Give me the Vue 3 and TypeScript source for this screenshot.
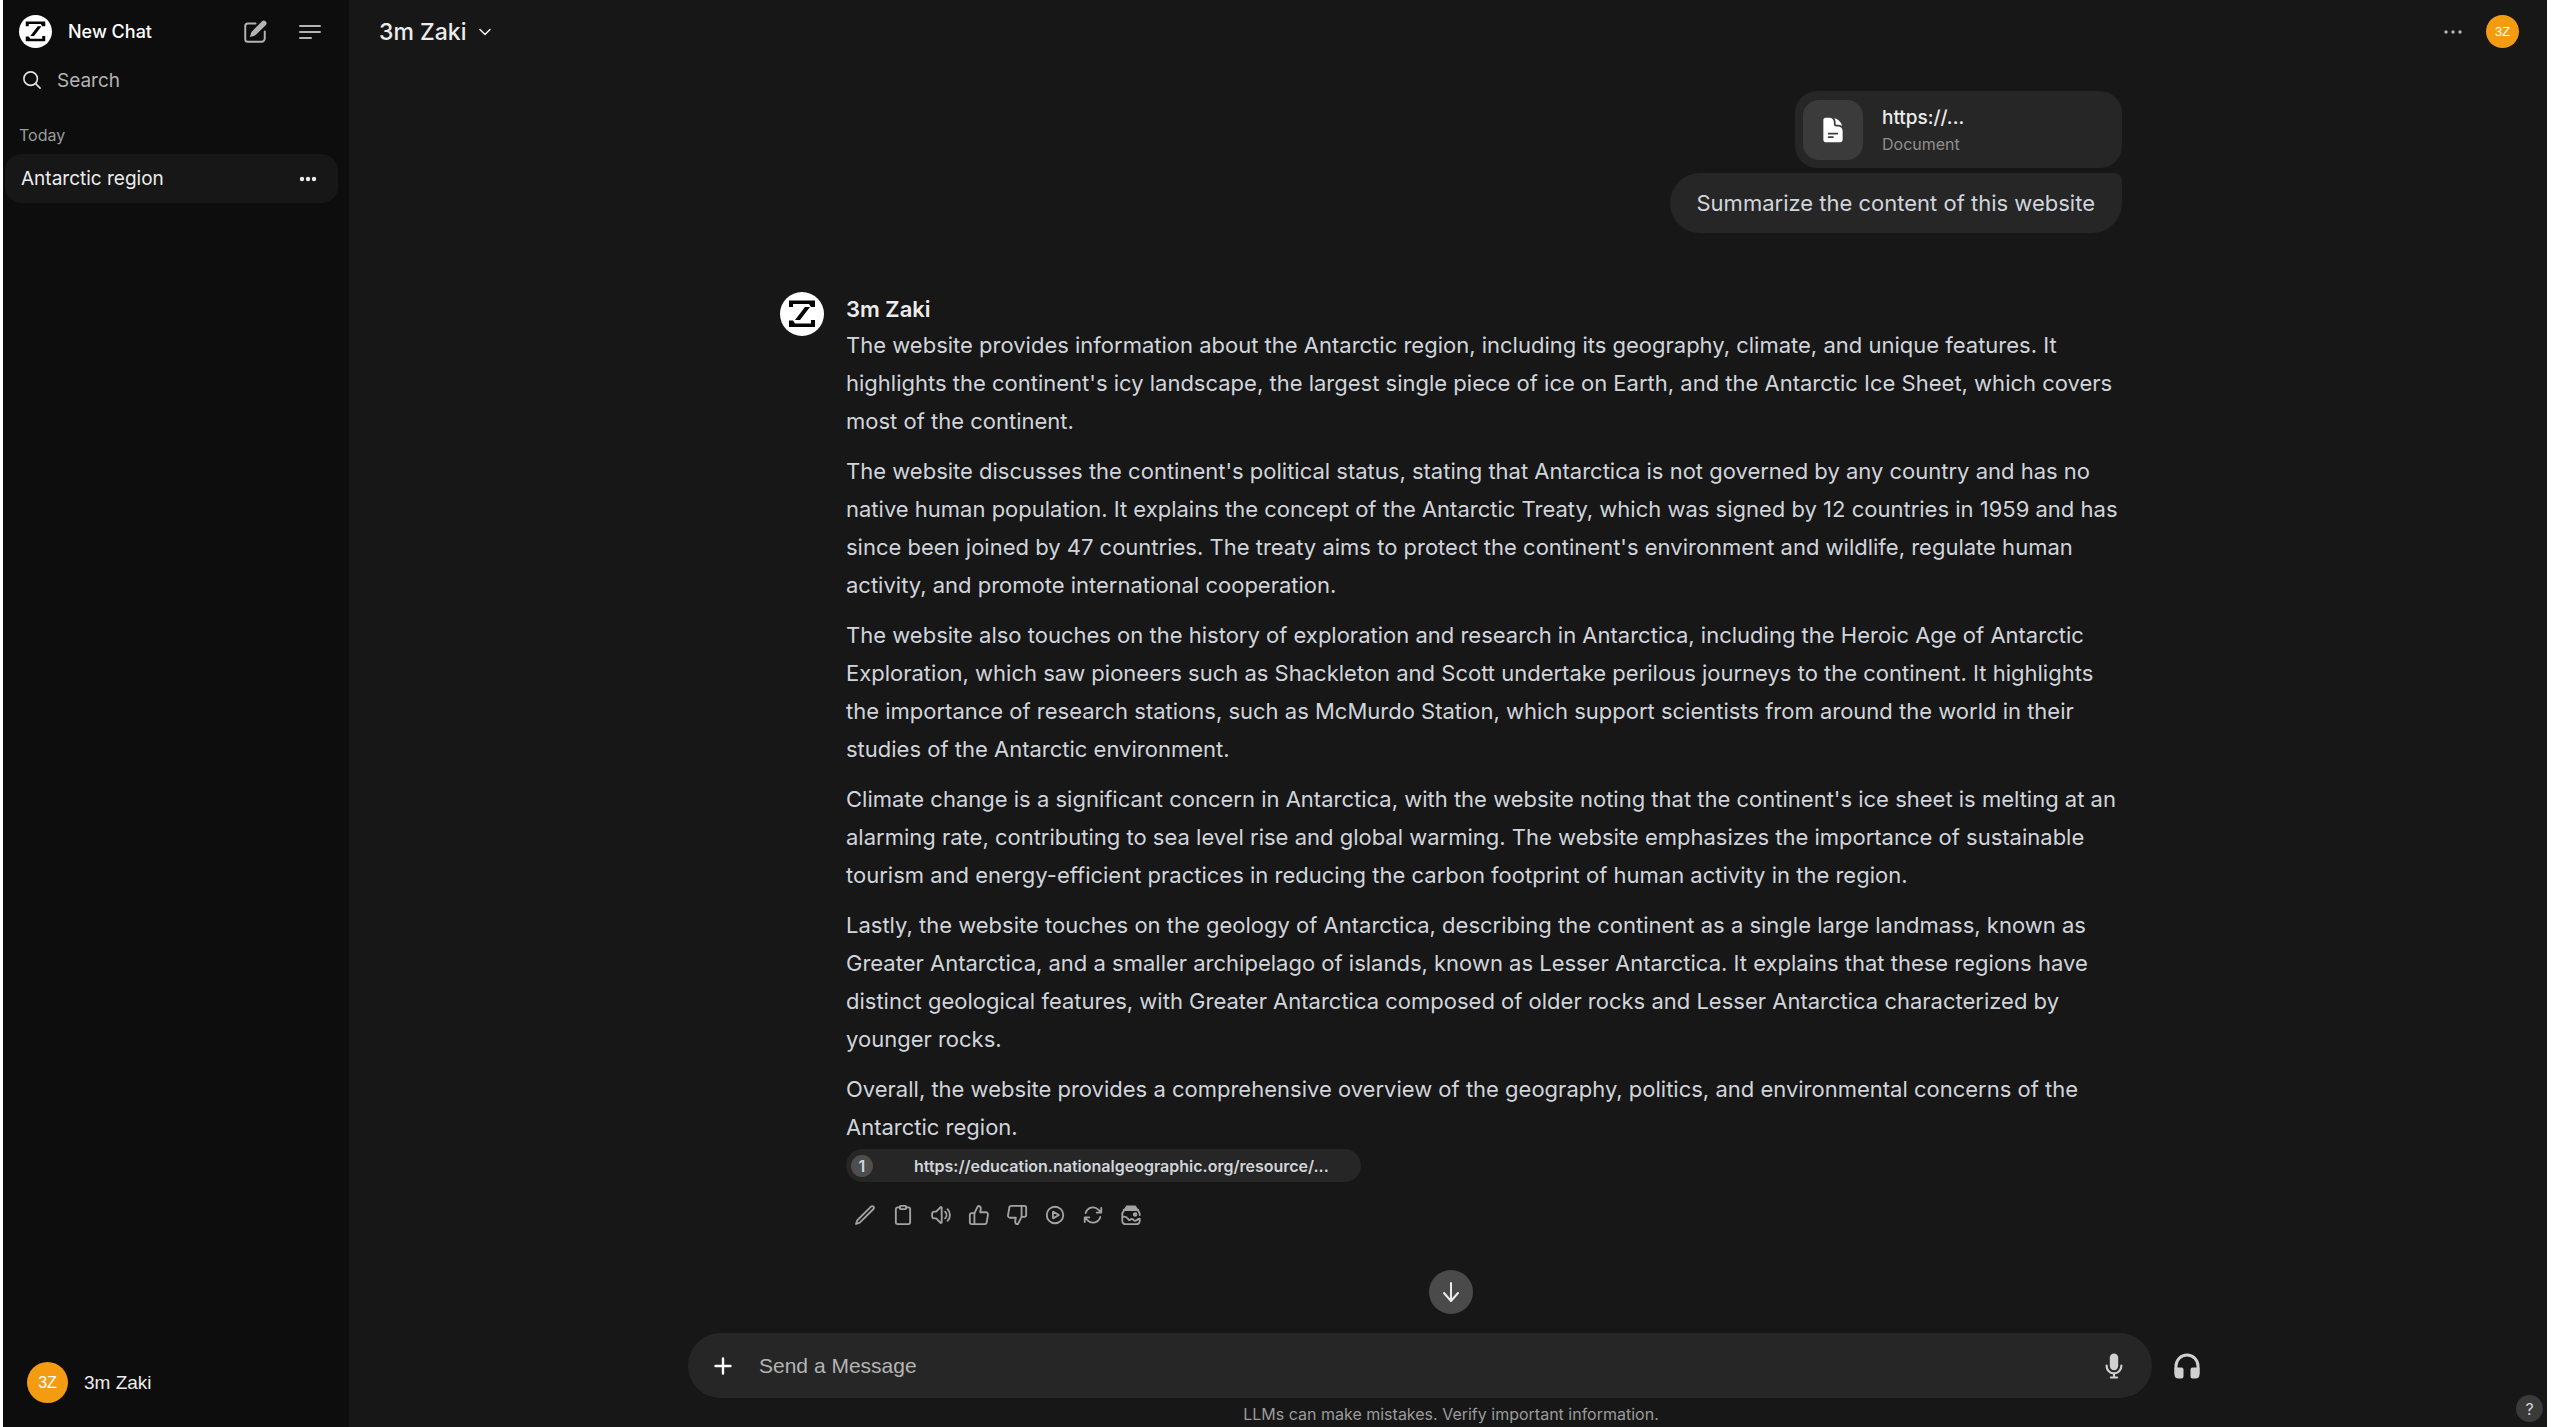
<script setup lang="ts">
import { ref } from 'vue'

interface Action {
  name: string
  paths: string[]
}

const draft = ref('')
const query = ref('')

const paragraphs: string[] = [
  "The website provides information about the Antarctic region, including its geography, climate, and unique features. It highlights the continent's icy landscape, the largest single piece of ice on Earth, and the Antarctic Ice Sheet, which covers most of the continent.",
  "The website discusses the continent's political status, stating that Antarctica is not governed by any country and has no native human population. It explains the concept of the Antarctic Treaty, which was signed by 12 countries in 1959 and has since been joined by 47 countries. The treaty aims to protect the continent's environment and wildlife, regulate human activity, and promote international cooperation.",
  'The website also touches on the history of exploration and research in Antarctica, including the Heroic Age of Antarctic Exploration, which saw pioneers such as Shackleton and Scott undertake perilous journeys to the continent. It highlights the importance of research stations, such as McMurdo Station, which support scientists from around the world in their studies of the Antarctic environment.',
  "Climate change is a significant concern in Antarctica, with the website noting that the continent's ice sheet is melting at an alarming rate, contributing to sea level rise and global warming. The website emphasizes the importance of sustainable tourism and energy-efficient practices in reducing the carbon footprint of human activity in the region.",
  'Lastly, the website touches on the geology of Antarctica, describing the continent as a single large landmass, known as Greater Antarctica, and a smaller archipelago of islands, known as Lesser Antarctica. It explains that these regions have distinct geological features, with Greater Antarctica composed of older rocks and Lesser Antarctica characterized by younger rocks.',
  'Overall, the website provides a comprehensive overview of the geography, politics, and environmental concerns of the Antarctic region.',
]

const actions: Action[] = [
  { name: 'Edit', paths: ['M16.862 4.487l1.687-1.688a1.875 1.875 0 1 1 2.652 2.652L6.832 19.82a4.5 4.5 0 0 1-1.897 1.13l-2.685.8.8-2.685a4.5 4.5 0 0 1 1.13-1.897L16.863 4.487z'] },
  { name: 'Copy', paths: ['M8.5 3.7H6.2A2 2 0 0 0 4.2 5.7V20a2 2 0 0 0 2 2h11.6a2 2 0 0 0 2-2V5.7a2 2 0 0 0-2-2h-2.3', 'M9.5 2h5a1 1 0 0 1 1 1v1.6a1 1 0 0 1-1 1h-5a1 1 0 0 1-1-1V3a1 1 0 0 1 1-1z'] },
  { name: 'Read Aloud', paths: ['M19.114 5.636a9 9 0 0 1 0 12.728M16.463 8.288a5.25 5.25 0 0 1 0 7.424M6.75 8.25l4.72-4.72a.75.75 0 0 1 1.28.53v15.88a.75.75 0 0 1-1.28.53l-4.72-4.72H4.51c-.88 0-1.704-.507-1.938-1.354A9.01 9.01 0 0 1 2.25 12c0-.83.112-1.633.322-2.396C2.806 8.756 3.63 8.25 4.51 8.25H6.75z'] },
  { name: 'Good Response', paths: ['M7 10v12H4a2 2 0 0 1-2-2v-8a2 2 0 0 1 2-2z', 'M7 10l4-8a3 3 0 0 1 3 3l-.7 4H19.5a2.3 2.3 0 0 1 2.3 2.7l-1.4 8A2.3 2.3 0 0 1 18.1 22H7'] },
  { name: 'Bad Response', paths: ['M17 14V2h3a2 2 0 0 1 2 2v8a2 2 0 0 1-2 2z', 'M17 14l-4 8a3 3 0 0 1-3-3l.7-4H4.5a2.3 2.3 0 0 1-2.3-2.7l1.4-8A2.3 2.3 0 0 1 5.9 2H17'] },
  { name: 'Continue Response', paths: ['M21 12a9 9 0 1 1-18 0 9 9 0 0 1 18 0z', 'M15.91 11.672a.375.375 0 0 1 0 .656l-5.603 3.113a.375.375 0 0 1-.557-.328V8.887c0-.286.307-.466.557-.327l5.603 3.112z'] },
  { name: 'Regenerate', paths: ['M16.023 9.348h4.992V4.356M2.985 19.644v-4.992h4.992M2.985 14.652l3.181 3.183a8.25 8.25 0 0 0 13.803-3.7M4.031 9.865a8.25 8.25 0 0 1 13.803-3.7l3.181 3.182'] },
]
</script>

<template>
  <div class="app">
    <aside class="sidebar">
      <div class="side-top">
        <button class="brand" type="button">
          <svg class="logo" viewBox="0 0 44 44" aria-hidden="true">
            <circle cx="22" cy="22" r="22" fill="#fff" />
            <path d="M9 8.500H35V15H31L29 12H13V15H9ZM9 35V28.500H13L15 31.500H31V28H35V35ZM25 15H30L20 28H15Z" fill="#050505" />
          </svg>
          <span>New Chat</span>
        </button>
        <button class="icon-btn" type="button" aria-label="New Chat">
          <svg width="26" height="26" viewBox="0 0 24 24" aria-hidden="true">
            <path d="M12.5 4.200H5.400A2.400 2.400 0 0 0 3 6.600v12A2.400 2.400 0 0 0 5.400 21H18a3 3 0 0 0 3-3V11.500" fill="none" stroke="currentColor" stroke-width="1.800" stroke-linecap="round" />
            <path d="M21.900 2.200a2.600 2.600 0 0 0-3.600 0L9.600 11a5 5 0 0 0-1.300 2.200L7.300 16.600l3.600-1a5 5 0 0 0 2.200-1.300l8.800-8.600a2.500 2.500 0 0 0 0-3.500z" fill="currentColor" />
          </svg>
        </button>
        <button class="icon-btn menu-btn" type="button" aria-label="Toggle sidebar">
          <svg width="22" height="16" viewBox="0 0 22 16" fill="none" stroke="currentColor" stroke-width="2" stroke-linecap="round" aria-hidden="true">
            <path d="M1 2h20M1 8h20M1 14h11" />
          </svg>
        </button>
      </div>
      <label class="search">
        <svg width="18" height="18" viewBox="0 0 20 20" fill="none" stroke="currentColor" stroke-width="1.800" stroke-linecap="round" aria-hidden="true">
          <circle cx="8.500" cy="8.500" r="7.500" /><path d="M14 14l5 5" />
        </svg>
        <input v-model="query" type="text" placeholder="Search" aria-label="Search" />
      </label>
      <h2 class="group">Today</h2>
      <nav class="chat">
        <a href="#">Antarctic region</a>
        <button class="icon-btn" type="button" aria-label="Chat menu">
          <svg width="18" height="6" viewBox="0 0 18 6" fill="currentColor" aria-hidden="true"><circle cx="3" cy="3" r="2.200" /><circle cx="9" cy="3" r="2.200" /><circle cx="15" cy="3" r="2.200" /></svg>
        </button>
      </nav>
      <button class="account" type="button">
        <span class="initials large">3Z</span>
        <span>3m Zaki</span>
      </button>
    </aside>

    <main class="main">
      <header class="topbar">
        <button class="model" type="button">
          <span>3m Zaki</span>
          <svg width="14" height="8" viewBox="0 0 14 8" fill="none" stroke="currentColor" stroke-width="1.600" stroke-linecap="round" stroke-linejoin="round" aria-hidden="true"><path d="M2 1.500l5 5 5-5" /></svg>
        </button>
        <button class="icon-btn more" type="button" aria-label="More">
          <svg width="18" height="6" viewBox="0 0 18 6" fill="currentColor" aria-hidden="true"><circle cx="2" cy="3" r="1.700" /><circle cx="9" cy="3" r="1.700" /><circle cx="16" cy="3" r="1.700" /></svg>
        </button>
        <button class="initials" type="button" aria-label="Account">3Z</button>
      </header>

      <section class="thread">
        <div class="prompt">
          <button class="file" type="button">
            <span class="file-icon">
              <svg width="28" height="28" viewBox="0 0 24 24" fill="currentColor" aria-hidden="true">
                <path fill-rule="evenodd" d="M5.625 1.500c-1.036 0-1.875.84-1.875 1.875v17.250c0 1.035.84 1.875 1.875 1.875h12.750c1.035 0 1.875-.84 1.875-1.875V12.750A3.750 3.750 0 0 0 16.500 9h-1.875a1.875 1.875 0 0 1-1.875-1.875V5.250A3.750 3.750 0 0 0 9 1.500H5.625ZM7.500 15a.75.75 0 0 1 .75-.75h7.500a.75.75 0 0 1 0 1.500h-7.500A.75.75 0 0 1 7.500 15Zm.75 2.250a.75.75 0 0 0 0 1.500H12a.75.75 0 0 0 0-1.500H8.250Z" />
                <path d="M12.971 1.816A5.230 5.230 0 0 1 14.250 5.250v1.875c0 .207.168.375.375.375H16.500a5.230 5.230 0 0 1 3.434 1.279 9.768 9.768 0 0 0-6.963-6.963Z" />
              </svg>
            </span>
            <span class="file-text">
              <span class="file-name">https://...</span>
              <span class="file-kind">Document</span>
            </span>
          </button>
          <p class="bubble">Summarize the content of this website</p>
        </div>

        <article class="reply">
          <svg class="avatar" viewBox="0 0 44 44" aria-hidden="true">
            <circle cx="22" cy="22" r="22" fill="#fff" />
            <path d="M9 8.500H35V15H31L29 12H13V15H9ZM9 35V28.500H13L15 31.500H31V28H35V35ZM25 15H30L20 28H15Z" fill="#050505" />
          </svg>
          <div class="answer">
            <h3>3m Zaki</h3>
            <div class="prose">
              <p v-for="text in paragraphs" :key="text">{{ text }}</p>
            </div>
            <a class="source" href="#"><span class="index">1</span><span>https://education.nationalgeographic.org/resource/...</span></a>
            <div class="actions">
              <button v-for="action in actions" :key="action.name" class="icon-btn" type="button" :aria-label="action.name">
                <svg width="22" height="22" viewBox="0 0 24 24" fill="none" stroke="currentColor" stroke-width="2" stroke-linecap="round" stroke-linejoin="round" aria-hidden="true">
                  <path v-for="d in action.paths" :key="d" :d="d" />
                </svg>
              </button>
              <button class="icon-btn" type="button" aria-label="Generate Image">
                <svg width="22" height="22" viewBox="0 0 24 24" fill="none" stroke="currentColor" stroke-width="2" stroke-linecap="round" stroke-linejoin="round" aria-hidden="true">
                  <path d="M7 1.500h10l3 4.500H4z" fill="currentColor" stroke="none" />
                  <path d="M4 6.500h16M2.500 10v8.500A3.500 3.500 0 0 0 6 22h12a3.500 3.500 0 0 0 3.500-3.500V16M21.500 12v-1a4 4 0 0 0-1.500-3M2.500 11A4 4 0 0 1 4 8M3 14c4-1 5 1 6.500 3 1.500 2 2-1.500 4-.500s2 2.500 4 1.500 2-2 4-2" />
                  <circle cx="16.500" cy="11.500" r="1.500" fill="currentColor" />
                </svg>
              </button>
            </div>
          </div>
        </article>
      </section>

      <footer class="composer">
        <button class="down" type="button" aria-label="Scroll to bottom">
          <svg width="20" height="22" viewBox="0 0 20 22" fill="none" stroke="currentColor" stroke-width="2" stroke-linecap="round" stroke-linejoin="round" aria-hidden="true"><path d="M10 2v18M3 12l7 8 7-8" /></svg>
        </button>
        <form class="entry" @submit.prevent>
          <div class="field">
            <button class="icon-btn plus" type="button" aria-label="Add">
              <svg width="18" height="18" viewBox="0 0 18 18" fill="none" stroke="currentColor" stroke-width="2.400" stroke-linecap="round" aria-hidden="true"><path d="M9 1.500v15M1.500 9h15" /></svg>
            </button>
            <input v-model="draft" type="text" placeholder="Send a Message" aria-label="Send a Message" />
            <button class="icon-btn" type="button" aria-label="Record voice">
              <svg width="28" height="28" viewBox="0 0 20 20" fill="currentColor" aria-hidden="true">
                <path d="M7 4a3 3 0 0 1 6 0v6a3 3 0 1 1-6 0V4Z" />
                <path d="M5.500 9.643a.75.75 0 0 0-1.500 0V10c0 3.060 2.290 5.585 5.250 5.954V17.500h-1.500a.75.75 0 0 0 0 1.500h4.500a.75.75 0 0 0 0-1.500h-1.500v-1.546A6.001 6.001 0 0 0 16 10v-.357a.75.75 0 0 0-1.500 0V10a4.500 4.500 0 0 1-9 0v-.357Z" />
              </svg>
            </button>
          </div>
          <button class="icon-btn call" type="button" aria-label="Call">
            <svg width="26" height="26" viewBox="0 0 26 26" aria-hidden="true">
              <path d="M2 21V13a11 11 0 0 1 22 0v8" fill="none" stroke="currentColor" stroke-width="3" />
              <path d="M1 14.500h6.500a2 2 0 0 1 2 2V23.500a2 2 0 0 1-2 2H4.500A4 4 0 0 1 .500 21.500V14.500ZM25.500 14.500H18.500a2 2 0 0 0-2 2V23.500a2 2 0 0 0 2 2h3a4 4 0 0 0 4-4Z" fill="currentColor" />
            </svg>
          </button>
        </form>
        <p class="notice">LLMs can make mistakes. Verify important information.</p>
      </footer>
      <button class="help" type="button" aria-label="Help">?</button>
    </main>
  </div>
</template>

<style>
body {
  margin: 0;
  background: #fff;
}
</style>

<style scoped>
* {
  box-sizing: border-box;
}
.app {
  display: flex;
  min-height: 100vh;
  padding: 0 4px 0 3px;
  font-family: Inter, sans-serif;
  color: #ececec;
}
button {
  padding: 0;
  border: 0;
  background: none;
  color: inherit;
  font: inherit;
  text-align: left;
  cursor: pointer;
}
h2, h3, p {
  margin: 0;
}
svg {
  display: block;
  flex: none;
}
a {
  color: inherit;
  text-decoration: none;
}
input {
  flex: 1;
  min-width: 0;
  padding: 0;
  border: 0;
  outline: 0;
  background: none;
  color: #ececec;
}
.icon-btn {
  display: flex;
  align-items: center;
  justify-content: center;
  color: #b4b4b4;
}

.sidebar {
  display: flex;
  flex-direction: column;
  flex: none;
  width: 346px;
  background: #0d0d0d;
  font-size: 19px;
}
.side-top {
  display: flex;
  align-items: center;
  height: 63px;
  padding: 0 28px 0 16px;
}
.brand {
  display: flex;
  align-items: center;
  gap: 16px;
  margin-right: auto;
  color: #fff;
  font-size: 18px;
  font-weight: 500;
}
.logo {
  width: 33px;
  height: 33px;
}
.menu-btn {
  margin-left: 31px;
}
.search {
  display: flex;
  align-items: center;
  gap: 16px;
  height: 34px;
  padding: 0 20px;
  color: #e3e3e3;
}
.search input {
  font: 19px Inter, sans-serif;
}
.search input::placeholder {
  color: #b4b4b4;
  opacity: 1;
}
.group {
  margin-top: 26px;
  padding: 0 16px;
  color: #9b9b9b;
  font-size: 16px;
  font-weight: 400;
  line-height: 24px;
}
.chat {
  display: flex;
  align-items: center;
  justify-content: space-between;
  height: 49px;
  margin: 7px 11px 0 2px;
  padding: 0 21px 0 16px;
  border-radius: 16px;
  background: #171717;
}
.chat .icon-btn {
  color: #ececec;
}
.account {
  display: flex;
  align-items: center;
  gap: 16px;
  margin: auto 24px 24px;
  font: 19px "Liberation Sans", sans-serif;
}
.initials {
  display: flex;
  align-items: center;
  justify-content: center;
  width: 33px;
  height: 33px;
  border-radius: 50%;
  background: #f39c12;
  color: #fff;
  font: 13px "Liberation Sans", sans-serif;
}
.initials.large {
  width: 41px;
  height: 41px;
  font-size: 16px;
}

.main {
  position: relative;
  display: flex;
  flex-direction: column;
  flex: 1;
  min-width: 0;
  background: #171717;
}
.topbar {
  display: flex;
  align-items: center;
  height: 63px;
  padding: 0 28px 0 30px;
}
.model {
  display: flex;
  align-items: center;
  gap: 12px;
  margin-right: auto;
  font-size: 23px;
  font-weight: 500;
}
.more {
  margin-right: 24px;
}
.thread {
  width: 1348px;
  max-width: 100%;
  margin: 28px auto 0;
  padding-left: 6px;
}
.prompt {
  display: flex;
  flex-direction: column;
  align-items: flex-end;
  gap: 5px;
}
.file {
  display: flex;
  align-items: center;
  gap: 19px;
  width: 327px;
  height: 77px;
  padding: 0 8px;
  border-radius: 22px;
  background: #262626;
}
.file-icon {
  display: flex;
  align-items: center;
  justify-content: center;
  width: 60px;
  height: 60px;
  border-radius: 16px;
  background: #3b3b3b;
  color: #fff;
}
.file-text {
  display: flex;
  flex-direction: column;
  padding-top: 2px;
}
.file-name {
  font-size: 19px;
  font-weight: 500;
  line-height: 27px;
}
.file-kind {
  color: #8f8f8f;
  font-size: 16px;
  line-height: 27px;
}
.bubble {
  padding: 11px 27px;
  border-radius: 30px 8px 30px 30px;
  background: #262626;
  color: #d1d5db;
  font-size: 22px;
  line-height: 38px;
}
.reply {
  display: flex;
  gap: 22px;
  margin-top: 59px;
}
.avatar {
  width: 44px;
  height: 44px;
}
.answer {
  flex: 1;
  min-width: 0;
}
.answer h3 {
  font-size: 22px;
  font-weight: 600;
  line-height: 34px;
}
.prose {
  display: flex;
  flex-direction: column;
  gap: 12px;
  color: #d1d5db;
  font-size: 22px;
  line-height: 38px;
}
.source {
  display: flex;
  align-items: center;
  gap: 41px;
  width: fit-content;
  height: 33px;
  margin-top: 3px;
  padding: 0 32px 0 5px;
  border-radius: 17px;
  background: #262626;
  color: #d1d5db;
  font-size: 16px;
  font-weight: 600;
}
.index {
  width: 22px;
  border-radius: 11px;
  background: #4e4e4e;
  line-height: 22px;
  text-align: center;
}
.actions {
  display: flex;
  margin-top: 14px;
}
.actions .icon-btn {
  width: 38px;
  height: 38px;
  color: #a3a3a3;
}

.composer {
  display: flex;
  flex-direction: column;
  align-items: center;
  margin-top: auto;
  padding: 26px 0 0 6px;
}
.down {
  display: flex;
  align-items: center;
  justify-content: center;
  width: 44px;
  height: 44px;
  border-radius: 50%;
  background: #4a4a4a;
}
.entry {
  display: flex;
  align-items: center;
  gap: 22px;
  width: 1526px;
  max-width: 100%;
  margin-top: 19px;
}
.field {
  display: flex;
  flex: 1;
  align-items: center;
  gap: 27px;
  height: 65px;
  padding: 0 24px 0 26px;
  border-radius: 33px;
  background: #262626;
}
.field input {
  font: 21px "Liberation Sans", sans-serif;
}
.field input::placeholder {
  color: #b4b4b4;
  opacity: 1;
}
.field .icon-btn,
.call {
  color: #d0d0d0;
}
.field .plus {
  color: #fff;
}
.call {
  justify-content: flex-start;
  width: 40px;
  height: 40px;
}
.notice {
  padding: 6px 0 2px;
  color: #9b9b9b;
  font-size: 16px;
  line-height: 21px;
}
.help {
  position: absolute;
  right: 4px;
  bottom: 5px;
  width: 27px;
  height: 27px;
  border-radius: 50%;
  background: #3a3a3a;
  color: #d1d5db;
  font-size: 16px;
  text-align: center;
}
</style>
